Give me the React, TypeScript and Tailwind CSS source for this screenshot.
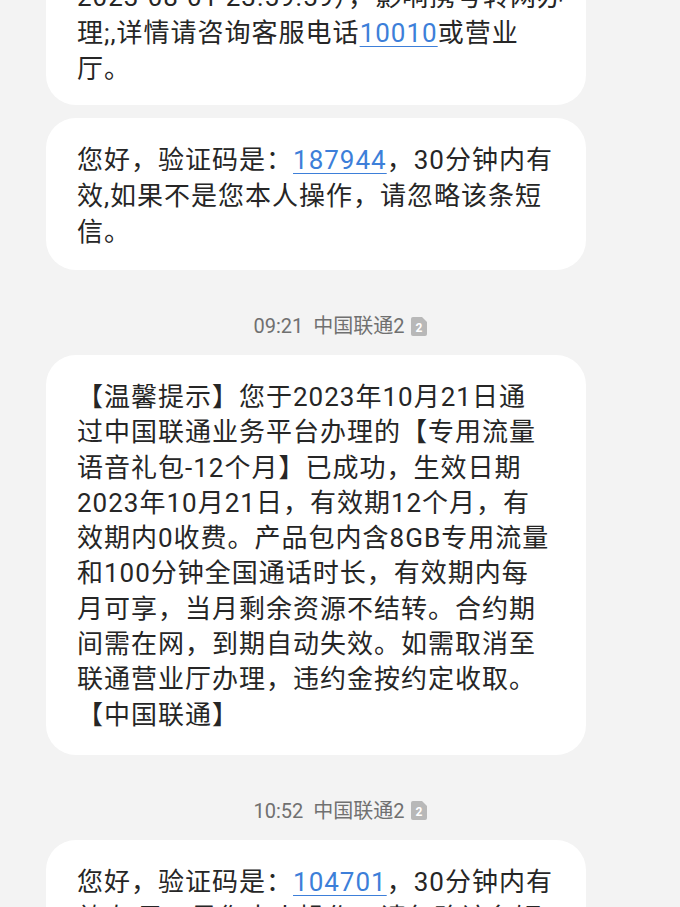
const FONT = { fontFamily: 'Roboto, "Noto Sans CJK SC", sans-serif' };

function Link({ children }: { children: React.ReactNode }) {
  return <span className="text-[#3d7fd9] underline decoration-1 underline-offset-[4px]">{children}</span>;
}

function Bubble({ children, className = "" }: { children: React.ReactNode; className?: string }) {
  return (
    <div className={`mx-[46px] w-[540px] rounded-[30px] bg-white pl-[31px] pr-[16px] text-[26px] tracking-[1px] text-[#262626] ${className}`}>
      {children}
    </div>
  );
}

function SimIcon() {
  return (
    <svg width="16" height="19" viewBox="0 0 16 19" className="ml-[6px]">
      <path d="M2 0H11L16 5V17A2 2 0 0 1 14 19H2A2 2 0 0 1 0 17V2A2 2 0 0 1 2 0Z" fill="#b8b8b8" />
      <text x="8" y="15" textAnchor="middle" fontSize="12" fontWeight="700" fill="#fff" fontFamily="Roboto, sans-serif">2</text>
    </svg>
  );
}

function Meta({ time }: { time: string }) {
  return (
    <div className="mt-[44px] mb-[17px] flex h-[24px] items-center justify-center text-[20px] text-[#707070]">
      <span>{time}</span>
      <span className="ml-[10px]">中国联通2</span>
      <SimIcon />
    </div>
  );
}

export default function App() {
  return (
    <div className="h-[907px] w-[680px] overflow-hidden bg-[#f3f3f3]" style={FONT}>
      <div className="-mt-[77px]">
        <Bubble className="pt-[20px] pb-[18px] leading-[36px]">
          <div>携号转网业务暂停服务（2023-08-01</div>
          <div>2023-08-01 23:59:59），影响携号转网办</div>
          <div>
            理;,详情请咨询客服电话<Link>10010</Link>或营业
          </div>
          <div>厅。</div>
        </Bubble>

        <Bubble className="mt-[13px] pt-[24px] pb-[20px] leading-[36px]">
          <div>
            您好，验证码是：<Link>187944</Link>，30分钟内有
          </div>
          <div>效,如果不是您本人操作，请忽略该条短</div>
          <div>信。</div>
        </Bubble>

        <Meta time="09:21" />

        <Bubble className="pt-[25px] pb-[22px] leading-[35.3px]">
          <div>【温馨提示】您于2023年10月21日通</div>
          <div>过中国联通业务平台办理的【专用流量</div>
          <div>语音礼包-12个月】已成功，生效日期</div>
          <div>2023年10月21日，有效期12个月，有</div>
          <div>效期内0收费。产品包内含8GB专用流量</div>
          <div>和100分钟全国通话时长，有效期内每</div>
          <div>月可享，当月剩余资源不结转。合约期</div>
          <div>间需在网，到期自动失效。如需取消至</div>
          <div>联通营业厅办理，违约金按约定收取。</div>
          <div>【中国联通】</div>
        </Bubble>

        <Meta time="10:52" />

        <Bubble className="pt-[24px] pb-[20px] leading-[36px]">
          <div>
            您好，验证码是：<Link>104701</Link>，30分钟内有
          </div>
          <div>效,如果不是您本人操作，请忽略该条短</div>
          <div>信。</div>
        </Bubble>
      </div>
    </div>
  );
}
